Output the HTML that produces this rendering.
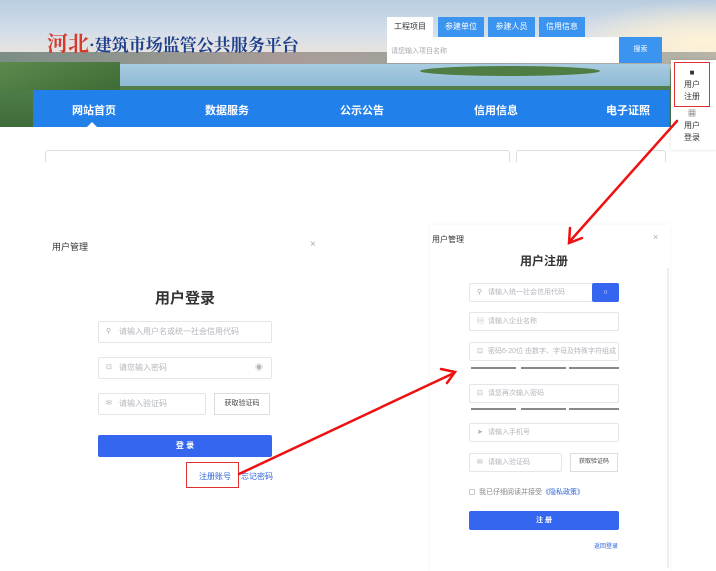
<!DOCTYPE html>
<html><head><meta charset="utf-8"><style>
*{margin:0;padding:0;box-sizing:border-box}
body{width:716px;height:571px;position:relative;overflow:hidden;background:#fff;font-family:"Liberation Sans","Noto Sans CJK SC",sans-serif;}
.a{position:absolute}
.banner{left:0;top:0;width:716px;height:127px;background:linear-gradient(180deg,#b9cde0 0%,#d4dee9 25%,#e6e3e0 40%,#cfc6c0 48%,#6e8f6a 55%,#4f7d48 70%,#3f6c3a 100%);}
.sun{left:560px;top:0;width:160px;height:70px;background:radial-gradient(ellipse at 90% 60%,#fff3d8 0%,rgba(255,240,210,.6) 35%,rgba(255,255,255,0) 70%)}
.water{left:110px;top:64px;width:560px;height:22px;background:linear-gradient(180deg,#a9cce0,#8ebad5)}
.nav{left:33px;top:90px;width:637px;height:37px;background:#2280ea;}
.nav span{position:absolute;top:12px;color:#fff;font-size:11px;font-weight:bold}
.tab{top:17px;height:20px;width:46px;font-size:8px;color:#fff;background:#3b95f0;text-align:center;line-height:20px}
.in{border:1px solid #e4e6ea;background:#fff;font-size:8px;color:#b3b6bc;padding-left:20px;border-radius:2px}
.in2{border:1px solid #e4e6ea;background:#fff;font-size:7px;color:#b3b6bc;padding-left:18px;border-radius:2px}
.ic{position:absolute;left:7px;font-size:7px;color:#aaa}
</style></head><body>
<div class="a banner"></div>
<div class="a sun"></div>
<div class="a" style="left:0;top:52px;width:716px;height:12px;background:linear-gradient(90deg,#7c8e86,#a99c98 40%,#9aa59e 70%,#b8b4a8)"></div>
<div class="a water"></div>
<div class="a" style="left:0;top:62px;width:120px;height:28px;background:linear-gradient(160deg,#5c8a4e,#3f6b36)"></div>
<div class="a" style="left:420px;top:66px;width:180px;height:10px;background:#4f7d43;border-radius:50%"></div>
<div class="a" style="left:47px;top:28px;font-family:'Noto Serif CJK SC',serif;font-size:17px;font-weight:bold;white-space:nowrap"><span style="color:#d43b2f;font-size:21px">河北</span><span style="color:#1d3f8c">·建筑市场监管公共服务平台</span></div>
<div class="a tab" style="left:387px;background:#fff;color:#333">工程项目</div>
<div class="a tab" style="left:438px">参建单位</div>
<div class="a tab" style="left:488px;width:47px">参建人员</div>
<div class="a tab" style="left:539px">信用信息</div>
<div class="a" style="left:387px;top:37px;width:232px;height:26px;background:#fff;font-size:7px;color:#aaa;padding:9px 0 0 4px">请您输入项目名称</div>
<div class="a" style="left:619px;top:37px;width:43px;height:26px;background:#3b95f0;color:#fff;font-size:7px;text-align:center;line-height:26px">搜索</div>
<div class="a nav"><span style="left:39px">网站首页</span><span style="left:172px">数据服务</span><span style="left:307px">公示公告</span><span style="left:441px">信用信息</span><span style="left:573px">电子证照</span>
<div class="a" style="left:54px;top:32px;border:5px solid transparent;border-bottom-color:#fff;border-top:0"></div></div>
<div class="a" style="left:45px;top:150px;width:465px;height:12px;border:1px solid #ddd;border-bottom:0;border-radius:3px 3px 0 0"></div>
<div class="a" style="left:516px;top:150px;width:150px;height:12px;border:1px solid #ddd;border-bottom:0;border-radius:3px 3px 0 0"></div>
<div class="a" style="left:671px;top:60px;width:45px;height:90px;background:#fff;box-shadow:0 0 3px rgba(0,0,0,.15)"></div>
<div class="a" style="left:674px;top:62px;width:36px;height:45px;border:1.5px solid #e03030;font-size:8px;text-align:center;color:#333;line-height:12px;padding-top:4px">■<br>用户<br>注册</div>
<div class="a" style="left:674px;top:108px;width:36px;height:40px;font-size:8px;text-align:center;color:#333;line-height:12px">▦<br>用户<br>登录</div>

<!-- login -->
<div class="a" style="left:52px;top:240px;font-size:9px;color:#333">用户管理</div>
<div class="a" style="left:310px;top:239px;font-size:10px;color:#aaa">×</div>
<div class="a" style="left:155px;top:287px;font-size:15px;font-weight:bold;color:#333">用户登录</div>
<div class="a in" style="left:98px;top:321px;width:174px;height:22px;line-height:20px"><span class="ic">⚲</span>请输入用户名或统一社会信用代码</div>
<div class="a in" style="left:98px;top:357px;width:174px;height:22px;line-height:20px"><span class="ic">⊡</span>请您输入密码<span style="position:absolute;right:8px">◉</span></div>
<div class="a in" style="left:98px;top:393px;width:108px;height:22px;line-height:20px"><span class="ic">✉</span>请输入验证码</div>
<div class="a" style="left:214px;top:393px;width:56px;height:22px;border:1px solid #ddd;font-size:7px;color:#444;text-align:center;line-height:20px">获取验证码</div>
<div class="a" style="left:98px;top:435px;width:174px;height:22px;background:#3566ef;border-radius:2px;color:#fff;font-size:8px;font-weight:bold;text-align:center;line-height:22px">登 录</div>
<div class="a" style="left:199px;top:471px;font-size:8px;color:#2c63d8">注册账号</div>
<div class="a" style="left:241px;top:471px;font-size:8px;color:#2c63d8">忘记密码</div>
<div class="a" style="left:186px;top:462px;width:53px;height:26px;border:1.5px solid #e03030"></div>

<!-- register -->
<div class="a" style="left:430px;top:225px;width:240px;height:346px;background:#fff;box-shadow:0 0 4px rgba(0,0,0,.06)"></div>
<div class="a" style="left:667px;top:268px;width:2px;height:300px;background:#eee"></div>
<div class="a" style="left:432px;top:234px;font-size:8px;color:#333">用户管理</div>
<div class="a" style="left:653px;top:232px;font-size:9px;color:#aaa">×</div>
<div class="a" style="left:520px;top:252px;font-size:12px;font-weight:bold;color:#333">用户注册</div>
<div class="a in2" style="left:469px;top:283px;width:124px;height:19px;line-height:17px"><span class="ic">⚲</span>请输入统一社会信用代码</div>
<div class="a" style="left:592px;top:283px;width:27px;height:19px;background:#3566ef;border-radius:2px;color:#fff;font-size:7px;text-align:center;line-height:19px">○</div>
<div class="a in2" style="left:469px;top:312px;width:150px;height:19px;line-height:17px"><span class="ic">▤</span>请输入企业名称</div>
<div class="a in2" style="left:469px;top:342px;width:150px;height:19px;line-height:17px;white-space:nowrap;overflow:hidden"><span class="ic">⊡</span>密码6-20位 由数字、字母及特殊字符组成</div>
<div class="a" style="left:471px;top:367px;width:45px;height:2px;background:#888"></div>
<div class="a" style="left:521px;top:367px;width:45px;height:2px;background:#888"></div>
<div class="a" style="left:569px;top:367px;width:50px;height:2px;background:#888"></div>
<div class="a in2" style="left:469px;top:384px;width:150px;height:19px;line-height:17px"><span class="ic">⊡</span>请您再次输入密码</div>
<div class="a" style="left:471px;top:408px;width:45px;height:2px;background:#888"></div>
<div class="a" style="left:521px;top:408px;width:45px;height:2px;background:#888"></div>
<div class="a" style="left:569px;top:408px;width:50px;height:2px;background:#888"></div>
<div class="a in2" style="left:469px;top:423px;width:150px;height:19px;line-height:17px"><span class="ic">➤</span>请输入手机号</div>
<div class="a in2" style="left:469px;top:453px;width:93px;height:19px;line-height:17px"><span class="ic">✉</span>请输入验证码</div>
<div class="a" style="left:570px;top:453px;width:48px;height:19px;border:1px solid #ddd;font-size:6px;color:#444;text-align:center;line-height:17px">获取验证码</div>
<div class="a" style="left:469px;top:489px;width:6px;height:6px;border:1px solid #ccc"></div>
<div class="a" style="left:479px;top:487px;font-size:7px;color:#888">我已仔细阅读并接受<span style="color:#2c63d8">《隐私政策》</span></div>
<div class="a" style="left:469px;top:511px;width:150px;height:19px;background:#3566ef;border-radius:2px;color:#fff;font-size:7px;font-weight:bold;text-align:center;line-height:19px">注 册</div>
<div class="a" style="left:594px;top:541px;font-size:6px;color:#2c63d8">返回登录</div>

<svg class="a" style="left:0;top:0" width="716" height="571">
<g stroke="#ee1111" stroke-width="2.5" fill="none" stroke-linecap="round">
<line x1="677" y1="121" x2="571" y2="240"/>
<polyline points="570,228 569,243 582,238"/>
<line x1="239" y1="474" x2="454" y2="373"/>
<polyline points="441,369 455,372 447,383"/>
</g></svg>
</body></html>
